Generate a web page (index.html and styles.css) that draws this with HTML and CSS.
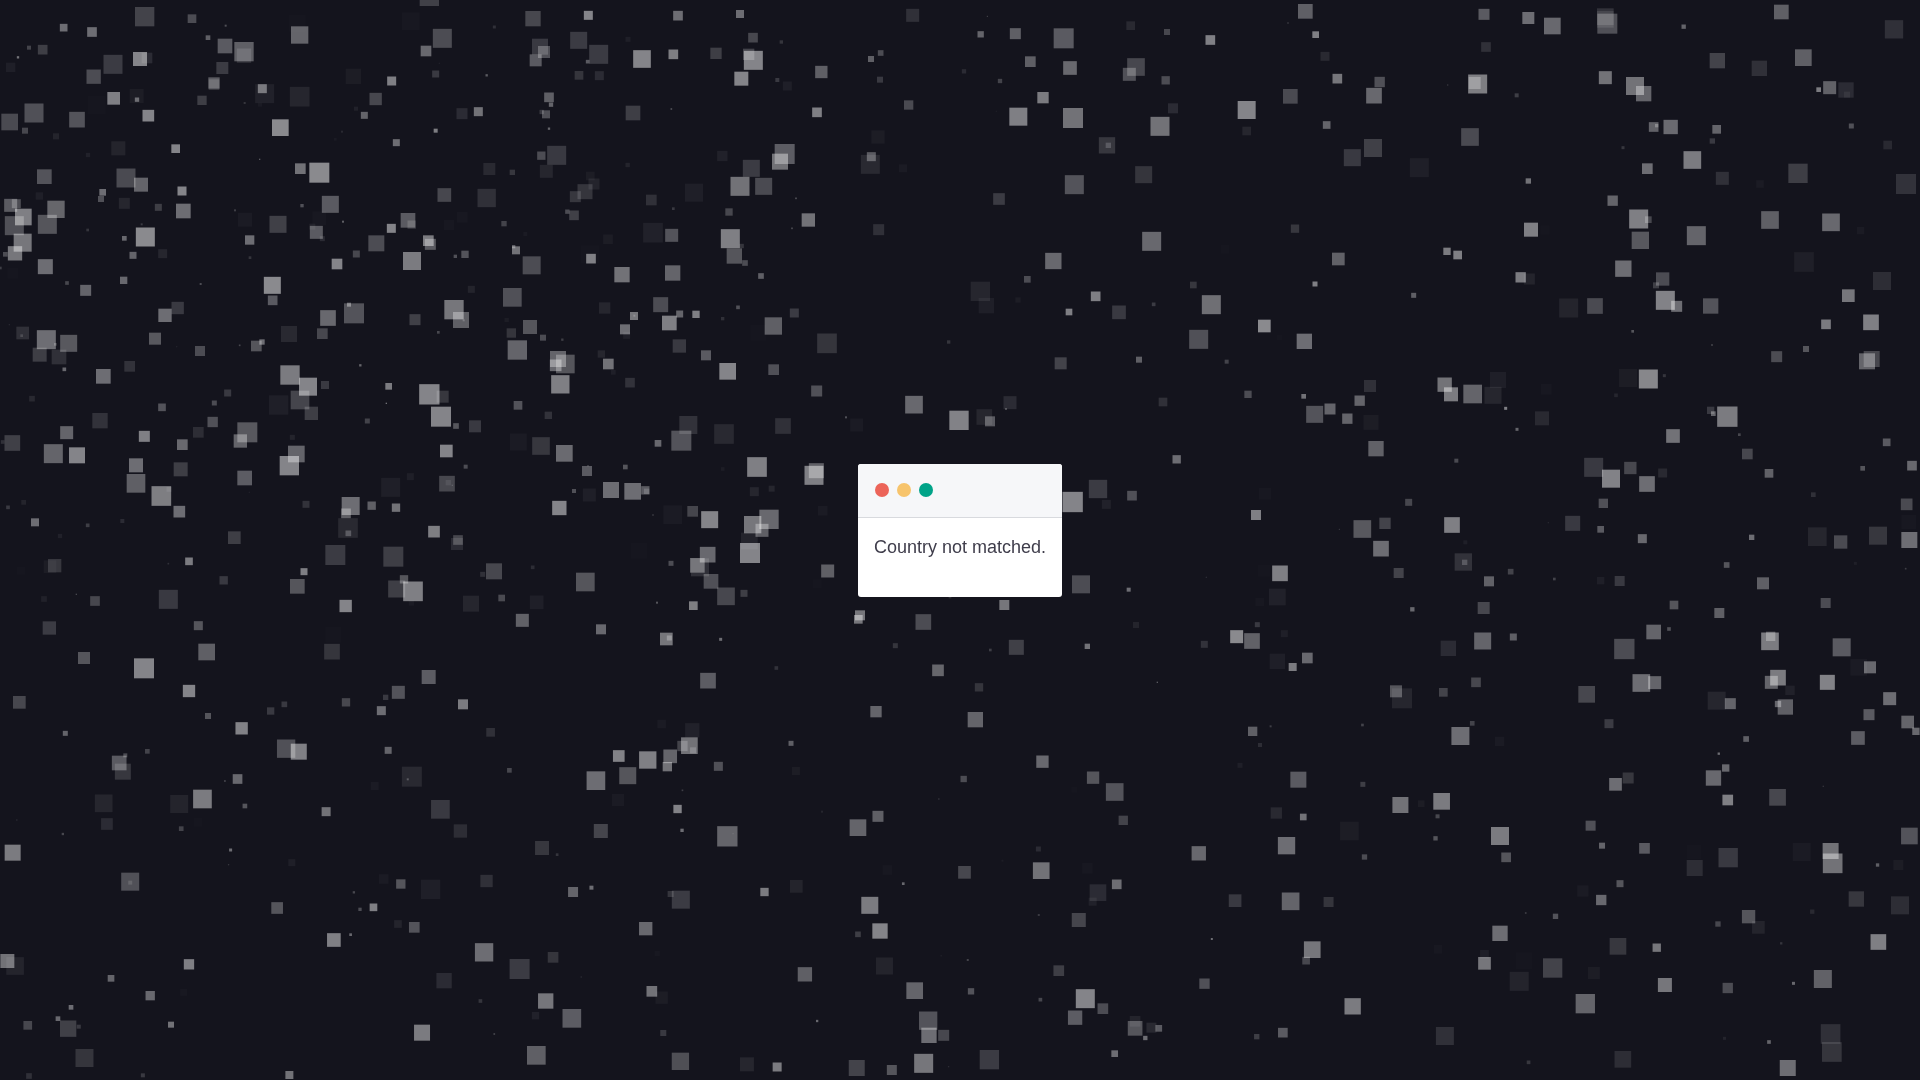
FILE: index.html
```html
<!DOCTYPE html>
<html lang="en">
<head>
<meta charset="utf-8">
<meta name="viewport" content="width=device-width, initial-scale=1">
<title>Country not matched.</title>
<link rel="stylesheet" href="styles.css">
</head>
<body>
<canvas class="particles" aria-hidden="true"></canvas>
<main class="stage">
  <section class="window">
    <header class="window-bar">
      <span class="dot dot-red"></span>
      <span class="dot dot-yellow"></span>
      <span class="dot dot-green"></span>
    </header>
    <div class="window-body">
      <p class="message">Country not matched.</p>
    </div>
  </section>
</main>
<script src="particles.js"></script>
</body>
</html>
```
FILE: styles.css
```css
* {
  box-sizing: border-box;
}

body {
  margin: 0;
  background: #14141d;
  color: #3f3d4b;
  font-family: "Liberation Sans", Arial, sans-serif;
  font-size: 18px;
  line-height: 27px;
}

.particles {
  position: absolute;
  inset: 0;
  z-index: -1;
  display: block;
  width: 100%;
  height: 100%;
}

.stage {
  display: flex;
  align-items: center;
  justify-content: center;
  min-height: 100vh;
  padding-bottom: 19px;
}

.window {
  overflow: hidden;
  border-radius: 3px;
  background: #fff;
}

.window-bar {
  display: flex;
  align-items: center;
  gap: 8px;
  padding: 19px 17px 20px;
  border-bottom: 1px solid #d8dade;
  background: #f6f7f9;
}

.dot {
  width: 14px;
  height: 14px;
  border-radius: 50%;
}

.dot-red {
  background: #ec6459;
}

.dot-yellow {
  background: #f7c46c;
}

.dot-green {
  background: #00a388;
}

.window-body {
  padding: 16px;
}

.message {
  margin: 0 0 20px;
}
```
FILE: particles.js
```js
// The field is split into tiles. Each particle is "cx cy size alpha%",
// with cx and size / cy in tile units (see the tile's sx and sy).
const WIDTH = 1920;
const HEIGHT = 1080;

const tiles = [
  { x: 0, y: 0, sx: 3, sy: 3, data: `
    434 50 58 20,576 56 26 24,191 83 23 38,276 96 29 38,87 143 12 20,128 149 29 18,54 172 7 40,32 202 28 5,
    339 193 57 17,420 177 42 48,441 174 32 10,281 230 43 24,677 77 6 25,624 113 14 32,675 138 44 30,732 155 58 32,732 167 43 12,
    667 204 36 17,642 249 34 30,642 254 32 14,606 301 28 18,734 309 6 14,787 266 27 40,794 281 57 6,899 105 52 34,899 290 59 8,
    341 295 38 46,410 288 42 4,411 299 13 36,445 347 35 48,102 339 57 26,29 366 50 23,231 359 47 27,75 392 18 22,168 409 18 7,
    355 445 42 7,264 465 13 6,527 446 26 48,779 478 4 30,841 383 50 50,901 506 32 40,958 518 60 50,1060 229 46 4,1068 326 12 6,
    1127 297 37 22,1175 243 27 46,1093 346 21 34,1189 428 21 38,1307 392 12 45,1386 341 33 10,1435 335 27 40,1278 153 32 36,1327 115 57 24,
    1288 -11 58 19,1232 64 54 2,1307 222 21 16,1026 395 6 9,133 530 44 27,378 534 57 23,423 554 42 34,118 588 22 5,
    308 577 20 38,303 597 18 26,546 573 27 48,550 633 44 38,475 622 21 18,373 610 33 8,32 616 39 30,49 611 27 24,
    70 651 50 46,43 677 57 26,168 628 52 35,142 673 57 28,68 728 54 42,45 760 43 42,16 763 14 24,136 800 45 38,
    436 711 57 50,373 715 14 36,399 766 21 34,488 761 27 8,263 690 8 14,425 673 6 16,705 631 6 18,735 659 42 3,
    749 720 28 38,834 673 51 19,750 773 8 14,906 617 10 26,991 613 51 30,958 655 42 2,949 697 39 30,937 680 18 6,967 716 15 10,
    1029 665 6 32,1069 762 21 22,1129 730 48 24,1174 685 27 48,1011 792 32 48,1236 783 54 44,1224 661 44 30,1235 674 25 14,1285 722 32 44,
    1291 733 33 30,1333 585 41 22,1387 652 32 2,1347 675 32 2,1366 769 10 26,1395 763 22 27,1 804 8 18,371 841 22 36,
    201 849 11 22,257 871 33 34,602 852 6 24,817 856 51 50,818 901 29 30,533 924 37 16,495 946 40 38,465 1016 36 29,
    68 999 38 12,65 1007 8 14,139 1019 57 38,166 1033 8 22,206 1030 51 29,119 1064 42 18,177 1071 44 12,600 1053 30 24,
    769 1038 32 28,786 1026 16 38,719 1036 5 22,867 1002 48 9,984 954 47 36,1062 940 60 27,1047 914 12 36,967 1001 32 22,
    1245 959 33 19,1362 929 58 42,1383 960 48 32,1391 961 6 20,1414 868 21 7,1315 997 8 22,28 974 4 8,38 820 32 1,
    290 315 54 1,892 70 50 1,780 314 12 3,1006 418 8 3,1318 190 4 5,530 1040 4 6` },
  { x: 480, y: 0, sx: 3, sy: 3, data: `
    159 56 46 22,325 46 27 48,594 47 29 38,780 42 24 38,43 81 9 12,296 121 51 17,356 163 57 17,323 185 11 30,
    180 140 48 16,192 156 36 26,167 181 36 30,297 226 26 14,358 227 27 10,444 118 15 5,486 177 53 48,580 163 29 45,
    708 160 34 18,819 113 29 22,820 181 57 48,806 163 34 20,784 236 42 48,904 126 10 14,922 258 27 5,892 240 12 16,
    1024 216 37 32,1011 337 29 46,1298 46 39 12,1202 159 17 24,1173 177 18 32,1200 239 18 16,1286 315 28 23,20 226 7 30,
    207 292 29 32,213 314 13 34,185 336 13 16,198 343 24 26,207 386 7 34,459 339 44 18,574 327 5 26,
    230 466 57 16,184 467 25 24,199 514 39 8,97 517 16 15,28 507 36 9,20 594 55 12,443 495 13 7,727 468 31 6,
    315 575 45 14,286 590 33 15,342 552 33 7,331 528 26 4,282 646 29 19,262 635 13 24,72 671 16 20,514 600 32 12,580 626 8 16,
    642 578 54 5,780 559 57 40,814 505 51 17,851 559 51 23,914 462 60 31,900 485 48 40,1194 411 40 4,1171 493 57 9,1174 470 27 30,
    1269 505 24 3,948 595 5 26,936 685 5 24,985 660 40 40,1196 689 33 12,747 636 22 22,751 716 57 46,785 738 13 14,
    763 768 46 28,795 789 17 24,843 828 17 32,519 698 59 6,575 706 39 27,384 718 29 4,330 763 54 1,333 776 29 46,136 702 12 3,
    101 740 10 30,108 751 24 40,155 796 54 24,426 824 46 40,578 819 46 34,97 892 56 26,374 924 34 8,462 948 24 42,463 947 6 20,
    542 914 45 24,599 942 21 34,568 969 44 46,648 943 22 46,774 922 11 26,728 956 10 12,943 939 27 17,880 978 52 32,835 998 48 1,
    1041 1030 59 14,598 1038 40 16,435 988 30 38,440 1006 21 5,94 999 28 14,150 981 42 28,80 960 13 4,189 1013 18 24,
    112 1050 58 34,247 1019 7 18,234 1077 48 34,256 1092 56 28,227 1096 35 36,364 1062 22 8,678 1066 30 30,1406 1026 10 14` },
  { x: 960, y: 0, sx: 3, sy: 3, data: `
    82 49 3 26,62 103 19 34,166 101 33 32,311 115 60 30,211 185 32 32,330 204 41 36,12 214 13 10,120 243 13 20,
    512 77 26 9,621 96 18 22,528 201 53 22,508 223 39 26,617 241 25 24,249 293 34 44,175 350 54 46,339 354 60 40,
    751 120 29 46,600 379 57 40,639 325 30 10,441 436 49 15,445 436 16 18,860 330 54 48,860 393 26 8,551 524 51 14,
    343 554 57 27,117 597 35 17,1036 34 44 32,984 69 6 9,1067 104 20 46,1095 169 27 9,1132 236 29 42,1259 246 31 26,
    991 289 44 23,1242 287 47 36,1100 375 23 34,1177 473 51 16,1239 444 54 19,1378 503 57 5,1005 686 25 15,575 724 57 36,
    280 783 49 36,202 838 20 24,61 874 58 8,79 917 46 5,174 900 16 4,327 936 20 46,407 889 29 46,477 937 41 16,
    581 913 11 17,700 855 20 15,754 914 57 39,716 1018 57 26,913 978 38 50,1033 1024 46 38,1065 852 15 46,1135 777 38 33,
    1361 886 15 32,302 1090 36 20,537 1079 18 32,795 748 26 1,958 1012 16 1,109 334 4 4,800 1085 12 20` },
  { x: 1440, y: 0, sx: 3, sy: 3, data: `
    132 43 33 30,265 54 36 38,337 78 50 36,496 50 50 13,502 71 60 26,496 58 50 10,731 80 13 34,138 141 29 12,
    1024 36 44 32,1362 88 55 12,832 182 46 20,958 205 46 12,1090 173 50 32,113 252 57 45,104 249 36 26,230 286 12 18,
    23 255 4 14,496 233 39 40,585 258 54 40,611 281 46 34,1136 269 14 44,1169 263 39 33,1218 270 46 10,1221 284 18 6,
    90 411 53 23,641 381 29 33,650 377 10 26,692 381 43 37,830 388 26 34,817 423 16 16,549 443 9 15,1234 378 15 26,
    757 480 53 44,622 506 32 38,1343 435 26 9,847 535 39 12,960 552 23 3,1074 520 58 18,1398 552 60 13,265 543 16 40,
    518 602 31 34,596 657 57 46,625 659 20 22,601 721 52 29,273 689 42 46,769 707 57 34,990 660 53 32,1173 667 53 36,
    1262 692 22 3,315 690 28 1,21 754 22 44,53 765 26 46,1092 786 59 5,1326 843 54 11,550 806 49 38,668 837 40 24,
    648 856 18 18,242 832 31 44,268 837 33 7,386 924 57 7,465 918 47 23,676 901 57 47,710 919 33 38,812 918 46 27,
    1225 887 38 42,1158 973 29 44,1293 967 47 46,578 994 8 28,816 1035 5 22,1098 1047 18 28,1010 1070 33 24,
    1295 1077 48 22,1281 1084 48 34` },
  { x: 0, y: 360, sx: 3, sy: 3, data: `
    193 28 11 36,310 49 44 38,389 19 32 13,96 116 17 9,486 142 23 27,643 129 15 24,683 99 21 16,638 186 31 26,
    300 182 46 13,200 218 39 34,595 217 32 11,37 249 47 19,8 246 11 12,160 281 57 34,231 286 48 48,433 229 33 46,
    547 254 32 36,742 217 60 29,721 243 40 34,542 328 42 18,408 316 42 38,408 370 56 32,734 354 44 31,484 408 59 45,
    507 388 15 8,538 455 35 38,71 427 14 7,24 442 11 16,105 487 24 38,263 496 11 18,367 483 12 10,180 528 13 6,
    567 604 23 44,703 533 38 18,164 617 40 15,150 620 38 4,671 661 25 16,132 717 17 6,229 703 4 22,285 723 29 22,
    505 718 57 16,505 611 5 12,148 804 40 17,595 797 27 28,620 876 50 32,252 894 36 28,432 925 60 48,567 993 37 48,
    58 1027 38 22,624 1068 18 28,870 45 58 44,924 80 54 48,900 120 56 21,934 160 40 18,836 135 58 5,975 75 24 16,
    1081 16 7 35,1166 79 20 44,1159 130 4 40,1102 183 15 20,1288 103 61 48,1328 110 36 15,1323 170 60 48,1368 198 17 28,
    1425 199 36 16,877 232 15 7,889 282 50 34,868 317 58 48,1339 273 38 48,1397 320 12 24,1341 371 47 22,1345 368 16 7,1357 376 4 15,
    1172 382 57 5,1231 350 21 5,1052 438 54 38,1038 460 29 32,1115 437 25 32,1188 443 25 40,1044 504 59 9,1045 520 17 24,
    918 433 21 13,1302 515 35 45,1374 540 29 22,1371 552 36 10,1006 585 60 17,1180 590 60 18,912 635 21 46,892 679 44 28,
    1190 687 51 18,1212 658 25 28,1239 694 59 46,1037 738 37 48,1413 731 48 8,1234 729 16 3,996 875 47 14,
    1286 951 42 31,1195 997 39 27,1157 1012 16 16,1038 1027 25 22,1144 1052 27 38,1389 1033 30 44,853 1033 17 16,812 1053 22 16,
    1000 824 48 1,63 632 24 1,748 397 4 5` },
  { x: 480, y: 360, sx: 3, sy: 3, data: `
    241 73 55 46,385 12 32 40,400 37 14 5,450 68 29 13,114 136 26 27,205 166 22 13,115 246 51 3,183 258 53 15,
    253 280 50 37,321 333 30 30,436 321 14 28,282 393 12 26,328 405 39 5,393 390 48 38,458 394 50 38,496 391 25 30,500 394 16 16,
    238 444 43 48,534 250 20 36,625 195 54 13,604 242 60 27,732 222 59 9,743 34 50 48,881 29 32 26,1010 93 33 26,
    909 198 47 12,831 321 59 46,1302 134 53 36,1437 181 58 47,1130 195 39 3,1098 172 6 26,1002 346 57 46,1009 332 45 32,
    823 395 27 8,875 386 18 8,728 327 11 4,578 464 56 3,638 454 32 21,519 465 5 14,689 479 51 48,818 494 52 42,
    867 478 58 36,846 511 39 32,808 543 50 7,810 579 60 48,1028 452 29 3,477 572 48 1,683 584 47 36,652 616 44 34,
    660 622 54 12,693 664 44 26,738 709 53 22,792 700 21 18,573 610 15 24,42 634 48 22,8 643 15 12,158 622 11 11,
    316 666 56 28,65 714 20 23,170 727 41 5,127 781 39 33,363 808 30 36,531 728 6 28,640 737 26 45,559 837 38 42,
    568 834 15 26,722 838 9 38,1043 633 39 32,684 962 47 31,889 924 11 13,1140 766 30 42,1135 778 26 42,1330 786 47 24,
    1246 857 15 14,1374 931 35 35,1188 1055 34 34,1410 711 8 12,1012 671 26 1,324 317 4 24` },
  { x: 960, y: 360, sx: 3, sy: 3, data: `
    150 128 39 10,138 147 6 22,73 171 47 8,90 184 30 30,609 126 26 12,650 298 25 38,338 426 61 48,414 387 55 17,
    439 433 27 6,516 407 29 26,363 673 54 24,506 689 12 38,133 735 30 42,528 795 18 7,169 862 45 19,91 870 8 18,
    382 859 16 40,57 982 25 14,46 1079 46 34,864 103 22 24,1031 109 14 40,1064 163 51 27,1110 147 33 34,1162 176 31 34,
    1199 122 31 34,1230 78 36 12,1233 187 45 4,1248 266 46 33,915 401 36 2,888 465 30 46,1346 427 21 22,1207 507 53 29,
    1275 490 34 20,1263 566 47 38,1316 639 30 20,960 640 47 46,952 711 50 6,912 632 36 1,899 726 26 2,1357 748 13 36,
    892 794 15 16,830 830 39 50,876 843 47 33,973 821 21 5,733 853 21 13,952 904 46 5,998 921 24 44,1042 894 32 36,
    592 967 4 30,1308 994 36 28,1326 1015 60 8,739 652 4 10,1138 508 3 20` },
  { x: 1440, y: 360, sx: 3, sy: 3, data: `
    14 74 43 40,33 103 42 44,98 102 56 34,174 60 48 5,159 106 51 8,319 88 32 2,197 145 9 46,231 208 9 34,
    306 175 42 9,564 54 54 4,625 57 57 49,528 106 11 8,673 47 9 14,812 151 22 16,820 161 14 34,862 170 61 44,
    699 228 41 40,898 224 8 22,922 282 32 22,987 340 26 33,49 302 12 23,461 322 57 16,571 324 37 22,513 356 54 47,
    621 372 47 38,668 339 27 9,490 430 28 26,398 490 45 16,482 508 20 30,36 495 47 46,76 547 12 5,607 536 27 36,
    325 488 4 8,935 532 16 38,1120 404 14 12,1268 325 14 28,1340 247 23 30,1416 317 29 36,1400 433 35 23,1406 486 44 2,
    1408 540 48 38,1132 530 56 8,1202 546 40 23,1314 527 54 15,1246 610 9 5,1397 626 5 18,860 615 17 28,969 670 36 32,
    70 606 52 13,74 607 16 20,212 635 17 20,147 664 30 33,343 657 8 20,482 662 22 5,539 663 30 16,131 744 36 22,
    702 735 26 28,838 759 30 32,1157 729 30 24,128 843 51 34,220 831 21 32,25 865 46 10,641 816 44 34,687 807 11 25,
    553 867 61 24,990 844 53 44,992 829 28 28,1205 862 54 30,1256 922 50 3,1290 922 36 36,108 967 29 22,10 997 26 20,
    440 1003 50 22,604 969 53 38,644 968 39 34,994 967 39 34,1014 953 47 44,1050 991 28 6,1162 967 45 47,
    830 1022 54 8,871 1031 33 34,1036 1041 46 32,1014 1032 19 34,1349 1016 39 38,1287 1064 33 30,1403 1086 38 34` },
  { x: 0, y: 720, sx: 2.45, sy: 3, data: `
    592 25 37 47,160 40 15 34,361 94 14 20,307 106 12 24,292 129 44 30,301 155 48 15,701 86 55 26,732 95 48 46,
    951 91 21 34,1202 37 26 12,1248 151 14 22,582 177 29 36,551 183 5 22,496 237 56 44,439 252 54 7,254 250 53 8,
    262 312 35 10,600 258 14 28,444 326 14 20,154 342 7 22,799 275 27 40,918 198 24 3,1009 170 60 9,999 178 6 24,
    1079 268 56 16,1128 333 40 11,1460 182 56 38,1516 108 35 47,1538 167 51 28,1514 240 37 3,31 398 48 44,565 390 9 38,
    560 434 4 14,715 428 21 5,319 485 54 26,319 488 12 12,679 564 35 28,940 477 29 3,982 492 28 28,867 517 7 22,
    915 562 23 46,882 568 10 24,1055 508 58 5,1192 483 37 12,975 612 23 7,1015 622 32 27,859 644 8 36,818 660 41 46,
    1328 384 42 15,1365 404 8 14,1472 333 42 21,1404 516 30 34,1449 503 12 38,18 723 42 40,37 738 53 7,463 733 31 46,
    272 775 20 34,368 827 28 36,450 817 21 2,174 862 14 38,142 896 14 36,68 916 26 22,167 926 49 19,193 920 12 16,
    419 914 18 40,207 1014 54 14,71 1068 17 12,350 1066 12 16,709 1065 24 40,1034 938 48 44,1186 697 55 38,1088 782 46 10,
    1273 747 60 17,1355 712 32 14,1177 843 11 14,1312 887 22 6,1337 843 46 42,1401 895 56 31,1314 1006 56 32,1211 942 5 22,
    1424 771 4 10,485 307 26 1,41 300 5 7` },
  { x: 640, y: 720, sx: 2.45, sy: 3, data: `
    19 120 52 46,53 12 26 3,128 31 43 6,121 77 50 40,104 78 31 20,130 91 18 18,74 109 41 34,67 140 28 40,
    192 139 27 26,370 70 15 32,382 153 24 4,104 211 5 18,92 267 25 47,103 331 10 38,214 349 61 34,228 341 4 10,
    534 323 50 34,583 289 33 32,446 275 6 8,793 177 19 24,732 237 5 10,986 125 37 36,1110 173 37 28,1163 216 53 27,
    1184 301 28 20,1501 34 28 32,1519 75 12 11,1545 19 6 18,1470 136 15 5,1064 209 18 1,976 387 15 10,1369 400 43 36,
    983 452 50 40,795 457 38 22,606 450 29 2,383 499 38 7,645 491 8 36,305 516 25 44,100 539 54 17,75 522 18 14,
    14 626 40 36,534 643 17 18,563 556 51 44,588 633 46 48,599 738 51 7,404 763 43 32,673 812 50 34,803 720 6 20,
    811 814 19 27,29 814 32 40,53 833 37 4,434 903 7 36,57 939 18 16,99 1024 52 25,262 1033 42 8,336 1041 27 44,
    531 1044 48 20,617 1050 30 28,695 1030 57 42,706 902 55 27,708 946 46 38,744 946 33 22,856 1019 58 17,
    1096 445 32 2,1122 518 50 10,1109 545 24 6,1168 493 29 38,977 585 6 16,1075 600 42 21,1026 752 32 18,1091 836 57 48,
    1134 866 32 24,1066 893 43 31,981 839 11 22,1213 925 44 28,1213 904 32 7,1253 923 30 9,1271 925 20 30,1238 954 13 38,
    1163 1001 20 38,1458 542 38 16,1401 657 6 38,1383 791 31 26,1511 950 16 18,756 1040 4 10,42 701 16 2,888 422 6 4,738 707 5 4` },
  { x: 1280, y: 720, sx: 2.45, sy: 3, data: `
    202 15 8 20,471 10 14 20,442 48 54 38,538 64 28 3,45 179 48 30,203 193 15 18,295 255 48 40,346 251 20 4,
    396 244 50 44,386 289 12 22,57 291 20 40,-9 279 34 9,170 333 56 4,381 355 13 28,539 348 54 44,554 412 29 28,
    16 377 52 38,207 411 16 24,26 544 53 34,119 546 30 14,806 11 27 17,822 193 38 38,853 174 33 15,761 317 30 26,
    789 377 18 34,893 385 32 30,1062 174 46 36,1092 144 22 36,1097 240 32 46,1075 101 7 38,1142 57 17 32,1219 232 50 22,
    1416 54 41 31,1558 34 22 36,1542 348 50 27,1278 396 54 3,1349 393 48 40,1354 430 59 40,1098 413 58 16,
    1016 444 48 11,1464 435 10 32,1515 435 30 4,833 491 21 28,742 513 34 3,787 540 31 36,675 589 16 27,602 579 5 18,
    539 640 46 38,501 730 38 42,501 703 26 5,387 688 26 2,598 722 51 1,586 784 57 7,668 744 58 20,769 759 36 4,
    828 679 50 15,923 683 25 42,943 795 42 42,748 851 58 34,1097 804 31 24,1073 612 16 22,1148 590 40 28,1172 622 38 7,
    1304 575 13 9,1228 670 7 14,1412 537 46 15,1519 556 54 11,1466 666 47 46,1330 777 54 33,1258 790 9 36,1089 955 9 7,
    1198 966 11 34,1244 1044 48 38,1349 942 59 12,1352 996 59 14,840 1018 50 11,609 1027 11 15,404 948 54 12,178 859 49 44,
    79 689 50 42,64 722 23 22,7 938 29 30,1331 199 4 14,1014 396 44 1` }
];

const canvas = document.querySelector(".particles");
const ctx = canvas.getContext("2d");

function draw() {
  canvas.width = canvas.clientWidth;
  canvas.height = canvas.clientHeight;
  const kx = canvas.width / WIDTH;
  const ky = canvas.height / HEIGHT;
  for (const tile of tiles) {
    for (const item of tile.data.split(",")) {
      const values = item.trim().split(/\s+/).map(Number);
      if (values.length !== 4) continue;
      const [cx, cy, size, alpha] = values;
      const side = size / tile.sy;
      ctx.fillStyle = `rgba(255, 255, 255, ${alpha / 100})`;
      ctx.fillRect(
        (tile.x + cx / tile.sx) * kx - side / 2,
        (tile.y + cy / tile.sy) * ky - side / 2,
        side,
        side
      );
    }
  }
}

draw();
window.addEventListener("resize", draw);
```
